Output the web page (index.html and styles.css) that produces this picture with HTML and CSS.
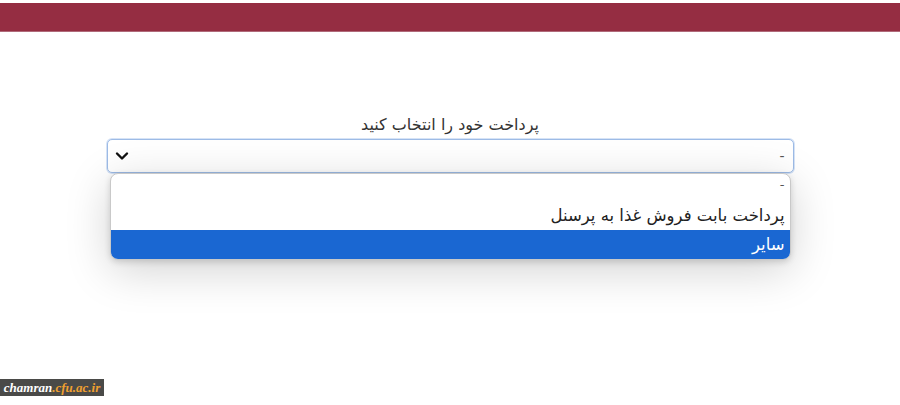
FILE: index.html
```html
<!DOCTYPE html>
<html lang="fa" dir="rtl">
<head>
<meta charset="UTF-8">
<meta name="viewport" content="width=device-width, initial-scale=1.0">
<title>پرداخت</title>
<link rel="stylesheet" href="styles.css">
</head>
<body>

<div class="topbar"></div>

<div class="container">
  <label class="caption" for="payment">پرداخت خود را انتخاب کنید</label>
  <div class="picker">
    <div class="select" id="payment">
      <span class="value">-</span>
      <svg class="chevron" width="14" height="10" viewBox="0 0 14 10">
        <path d="M2 2.5 L7 7.5 L12 2.5" fill="none" stroke="#111" stroke-width="2.4" stroke-linecap="round" stroke-linejoin="round"/>
      </svg>
    </div>
    <ul class="options">
      <li class="opt opt-dash">-</li>
      <li class="opt">پرداخت بابت فروش غذا به پرسنل</li>
      <li class="opt opt-active">سایر</li>
    </ul>
  </div>
</div>

<div class="badge" dir="ltr"><span class="badge-main">chamran</span><span class="badge-dom">.cfu.ac.ir</span></div>

</body>
</html>
```

FILE: styles.css
```css
body {
  margin: 0;
  padding: 0;
  background-color: #fff;
  font-family: "DejaVu Sans", "Noto Sans", sans-serif;
  color: #222;
  height: 405px;
  overflow: hidden;
  position: relative;
}

.topbar {
  margin-top: 3px;
  height: 28px;
  background-color: #952d42;
  border-bottom: 1px solid #b06a7a;
}

.container {
  width: 687px;
  margin: 83px auto 0;
  display: flex;
  flex-direction: column;
  align-items: center;
}

.caption {
  font-size: 16px;
  color: #333;
  margin-bottom: 5px;
}

.picker {
  position: relative;
  width: 100%;
}

.select {
  height: 32px;
  border: 1px solid #9dbbe6;
  border-radius: 5px;
  box-shadow: 0 0 0 1px #d6e3f6;
  display: flex;
  align-items: center;
  justify-content: space-between;
  padding: 0 8px 0 7px;
  font-size: 14px;
  background: #fff;
}

.value {
  color: #555;
}

.chevron {
  display: block;
}

/* dropdown list opened over the page */
.options {
  position: absolute;
  top: 34px;
  left: 3px;
  right: 3px;
  margin: 0;
  padding: 0;
  list-style: none;
  background: #fff;
  border: 1px solid #c9c9c9;
  border-radius: 8px;
  overflow: hidden;
  box-shadow: 0 10px 45px rgba(0, 0, 0, 0.18), 0 2px 6px rgba(0, 0, 0, 0.15);
}

.opt {
  padding: 0 5px;
  font-size: 16.5px;
  height: 29px;
  line-height: 29px;
}

.opt-dash {
  height: 27px;
  line-height: 22px;
  font-size: 13px;
  color: #555;
}

.opt-active {
  background-color: #1a67d2;
  color: #fff;
}

.badge {
  position: absolute;
  left: 0;
  bottom: 9px;
  width: 104px;
  height: 17px;
  background-color: #4a4a48;
  font-family: "Liberation Serif", serif;
  font-style: italic;
  font-weight: bold;
  font-size: 13px;
  line-height: 17px;
  text-align: center;
}

.badge-main {
  color: #fff;
}

.badge-dom {
  color: #f0a030;
}
```
